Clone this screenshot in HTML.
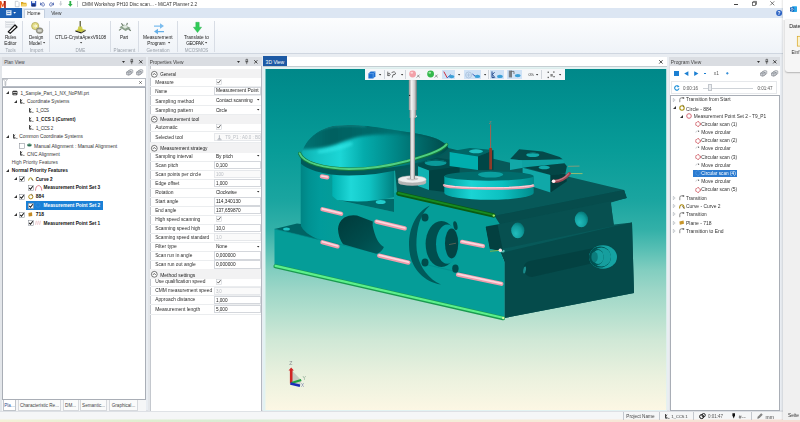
<!DOCTYPE html>
<html>
<head>
<meta charset="utf-8">
<title>MiCAT Planner 2.2</title>
<style>
html,body{margin:0;padding:0;}
body{width:800px;height:422px;overflow:hidden;position:relative;background:#eceff3;font-family:"Liberation Sans",sans-serif;font-size:4.8px;color:#222;line-height:1;}
.a{position:absolute;white-space:nowrap;}
.t{position:absolute;white-space:nowrap;color:#303030;}
svg{overflow:visible;}
#root{position:absolute;left:0;top:0;width:800px;height:422px;overflow:hidden;filter:blur(0.35px);}
</style>
</head>
<body>
<div id="root">
<div class="a" style="left:0.00px;top:0.00px;width:782.50px;height:8.20px;background:#ffffff;"></div>
<div class="a" style="left:0.00px;top:8.20px;width:782.50px;height:10.00px;background:#dce6f3;"></div>
<div class="a" style="left:0.00px;top:18.20px;width:782.50px;height:35.80px;background:linear-gradient(#fcfdfe,#eff3f8);border-bottom:0.6px solid #cfd6e0;box-sizing:border-box;"></div>
<div class="a" style="left:0.00px;top:54.00px;width:782.50px;height:357.00px;background:#e9edf2;"></div>
<div class="a" style="left:0.00px;top:410.30px;width:782.50px;height:1.70px;background:#dde0e5;"></div>
<div class="a" style="left:0.00px;top:412.00px;width:782.50px;height:8.20px;background:#f5f6f7;"></div>
<div class="a" style="left:0.00px;top:419.30px;width:800.00px;height:2.80px;background:linear-gradient(90deg,#f4f1d8,#dfeed0 18%,#d9ecd4 30%,#f1efd8 48%,#f7ead8 70%,#f5ddd4);-webkit-mask-image:linear-gradient(rgba(0,0,0,0.2),#000 45%);mask-image:linear-gradient(rgba(0,0,0,0.2),#000 45%);"></div>
<div class="a" style="left:782.50px;top:0.00px;width:17.50px;height:420.10px;background:#f0f0f0;"></div>
<div class="a" style="left:782.50px;top:0.00px;width:17.50px;height:19.50px;background:#ffffff;"></div>
<div class="a" style="left:784.70px;top:19.50px;width:20.00px;height:52.00px;background:#f6f6f6;border-radius:0 0 0 3px;box-shadow:0 0.5px 1.5px rgba(0,0,0,0.25);"></div>
<div class="a" style="left:780.50px;top:0.00px;width:2.50px;height:419.50px;background:linear-gradient(90deg,rgba(0,0,0,0),rgba(0,0,0,0.10));"></div>
<svg class="a" style="left:789.50px;top:6.30px" width="7" height="6.5" viewBox="0 0 7 6.5"><rect x="2" y="0.3" width="5" height="5.6" rx="0.6" fill="#28a8ea"/><rect x="0" y="1.2" width="4.2" height="4.2" rx="0.5" fill="#0f5fb8"/><circle cx="2.1" cy="3.3" r="1.1" fill="none" stroke="#fff" stroke-width="0.6"/></svg>
<div class="t" style="left:789.20px;top:22.91px;font-size:5.40px;line-height:6.48px;color:#222;">Date</div>
<svg class="a" style="left:796.60px;top:36.00px" width="4" height="10.5" viewBox="0 0 4 10.5"><rect x="0.3" y="0.3" width="6" height="9.8" fill="#fbf3d0" stroke="#d9a520" stroke-width="0.7"/></svg>
<div class="t" style="left:791.50px;top:49.99px;font-size:4.60px;line-height:5.52px;color:#333;">Einf</div>
<div class="t" style="left:788.00px;top:412.87px;font-size:4.80px;line-height:5.76px;color:#333;">Seite</div>
<svg class="a" style="left:0.00px;top:0.50px" width="6" height="7" viewBox="0 0 6 7"><path d="M0,0 L1.3,0 L2.8,4 L4.3,0 L5.6,0 L5.6,7 L4.3,7 L4.3,2.8 L3.2,6 L2.4,6 L1.3,2.8 L1.3,7 L0,7z" fill="#e8541c"/><path d="M3.6,0 L5.6,0 L5.6,7 L4.3,7 L4.3,2.8z" fill="#a01818"/></svg>
<svg class="a" style="left:15.00px;top:0.80px" width="4.4" height="6" viewBox="0 0 4.4 6"><path d="M0.3,0.3 L2.8,0.3 L4.1,1.6 L4.1,5.7 L0.3,5.7z" fill="#fff" stroke="#9aa4b0" stroke-width="0.5"/></svg>
<svg class="a" style="left:21.30px;top:1.20px" width="6.4" height="5.4" viewBox="0 0 6.4 5.4"><path d="M0,1 L2,1 L2.6,1.8 L5.4,1.8 L5.4,5.2 L0,5.2z" fill="#d9a520"/><path d="M0.9,2.8 L6.3,2.8 L5.4,5.2 L0,5.2z" fill="#f6d46a"/></svg>
<svg class="a" style="left:31.30px;top:1.00px" width="5.4" height="5.6" viewBox="0 0 5.4 5.6"><rect x="0" y="0" width="5.2" height="5.4" rx="0.4" fill="#2f56b8"/><rect x="1.1" y="0" width="3" height="2" fill="#dfe7f7"/><rect x="1" y="3.3" width="3.2" height="2.1" fill="#1a2f70"/></svg>
<svg class="a" style="left:40.00px;top:1.00px" width="5" height="5.5" viewBox="0 0 5 5.5"><path d="M0.6,1.6 L0.6,4 L3,4 M0.7,3.8 C1.5,1.2 4.4,1.2 4.4,3.6 C4.4,4.8 3.4,5.3 2.6,5.3" fill="none" stroke="#3b57a8" stroke-width="0.8"/></svg>
<svg class="a" style="left:48.60px;top:1.00px" width="5" height="5.5" viewBox="0 0 5 5.5"><path d="M4.4,1.6 L4.4,4 L2,4 M4.3,3.8 C3.5,1.2 0.6,1.2 0.6,3.6 C0.6,4.8 1.6,5.3 2.4,5.3" fill="none" stroke="#3b57a8" stroke-width="0.8"/></svg>
<svg class="a" style="left:58.60px;top:1.20px" width="3.4" height="5" viewBox="0 0 3.4 5"><path d="M1.1,0 L2.3,0 L2.3,2.6 L3.4,2.6 L1.7,5 L0,2.6 L1.1,2.6z" fill="#c9cdd3"/></svg>
<svg class="a" style="left:67.60px;top:0.80px" width="4.6" height="5.8" viewBox="0 0 4.6 5.8"><path d="M1.4,0 L3.2,0 L3.2,3 L4.6,3 L2.3,5.8 L0,3 L1.4,3z" fill="#2fb14a"/></svg>
<div class="a" style="left:77.00px;top:1.30px;width:0.50px;height:5.40px;background:#c8ccd2;"></div>
<div class="t" style="left:81.70px;top:1.63px;font-size:4.70px;line-height:5.64px;color:#333;">CMM Workshop PH10 Disc scan... - MiCAT Planner 2.2</div>
<div class="a" style="left:733.50px;top:4.20px;width:4.60px;height:0.60px;background:#444;"></div>
<svg class="a" style="left:752.00px;top:1.20px" width="5" height="5" viewBox="0 0 5 5"><rect x="0.4" y="1.2" width="3.2" height="3.2" fill="#fff" stroke="#444" stroke-width="0.7"/><path d="M1.4,1.2 L1.4,0.4 L4.5,0.4 L4.5,3.4 L3.6,3.4" fill="none" stroke="#444" stroke-width="0.7"/></svg>
<svg class="a" style="left:770.20px;top:1.20px" width="4.6" height="4.6" viewBox="0 0 4.6 4.6"><path d="M0.3,0.3 L4.3,4.3 M4.3,0.3 L0.3,4.3" stroke="#444" stroke-width="0.7"/></svg>
<svg class="a" style="left:776.40px;top:9.60px" width="6.2" height="6.2" viewBox="0 0 6.2 6.2"><circle cx="3.1" cy="3.1" r="3" fill="#2b62c4"/><text x="3.1" y="4.9" font-size="5" font-weight="bold" fill="#fff" text-anchor="middle" font-family="Liberation Sans, sans-serif">?</text></svg>
<div class="a" style="left:0.00px;top:8.20px;width:22.00px;height:10.00px;background:#1b5fb4;"></div>
<svg class="a" style="left:5.50px;top:10.40px" width="11" height="6" viewBox="0 0 11 6"><rect x="0.3" y="0.3" width="5" height="4.8" fill="#e9f1fb" stroke="#cfe0f5" stroke-width="0.3"/><rect x="1.2" y="1.4" width="3.2" height="0.7" fill="#1b5fb4"/><rect x="1.2" y="3" width="3.2" height="0.7" fill="#1b5fb4"/><path d="M7.3,2 L10,2 L8.65,3.7z" fill="#fff"/></svg>
<div class="a" style="left:24.00px;top:9.00px;width:20.50px;height:9.40px;background:#f9fbfd;border:0.5px solid #c3cfdf;border-bottom:none;box-sizing:border-box;"></div>
<div class="t" style="left:27.30px;top:11.18px;font-size:4.95px;line-height:5.94px;color:#222;">Home</div>
<div class="t" style="left:51.20px;top:11.27px;font-size:4.79px;line-height:5.75px;color:#333;">View</div>
<div class="a" style="left:22.20px;top:20.50px;width:0.50px;height:31.50px;background:#d8dde5;"></div>
<div class="a" style="left:49.20px;top:20.50px;width:0.50px;height:31.50px;background:#d8dde5;"></div>
<div class="a" style="left:110.00px;top:20.50px;width:0.50px;height:31.50px;background:#d8dde5;"></div>
<div class="a" style="left:137.70px;top:20.50px;width:0.50px;height:31.50px;background:#d8dde5;"></div>
<div class="a" style="left:177.40px;top:20.50px;width:0.50px;height:31.50px;background:#d8dde5;"></div>
<div class="a" style="left:213.60px;top:20.50px;width:0.50px;height:31.50px;background:#d8dde5;"></div>
<svg class="a" style="left:4.50px;top:21.00px" width="13" height="12.5" viewBox="0 0 13 12.5"><g stroke="#b9bec6" stroke-width="0.6"><path d="M1,1.6 H9 M1,3.4 H9 M1,5.2 H9"/></g><rect x="0.6" y="0.6" width="8.8" height="5.6" fill="none" stroke="#c4c8cf" stroke-width="0.4"/><path d="M3.2,10.8 L10,4 L12,6 L5.2,12.4z" fill="#fff" stroke="#111" stroke-width="1.2" stroke-linejoin="round"/></svg>
<div class="t" style="left:4.90px;top:35.36px;font-size:4.65px;line-height:5.58px;letter-spacing:-0.138px;color:#222;">Rules</div>
<div class="t" style="left:4.30px;top:40.90px;font-size:4.75px;line-height:5.70px;color:#222;">Editor</div>
<div class="t" style="left:5.45px;top:48.10px;font-size:4.41px;line-height:5.29px;color:#9aa1aa;">Tools</div>
<svg class="a" style="left:30.50px;top:21.50px" width="13" height="12" viewBox="0 0 13 12"><circle cx="4.2" cy="4" r="3.6" fill="#e4dd86" stroke="#a9a04a" stroke-width="0.7"/><path d="M2.6,4 H5.6 M4.4,2.8 L5.8,4 L4.4,5.2" stroke="#fff" stroke-width="0.9" fill="none"/><ellipse cx="8.6" cy="8.6" rx="3.4" ry="2.9" fill="#9a9a8c" stroke="#6e6e62" stroke-width="0.5"/><rect x="6.6" y="7.4" width="4" height="2.4" fill="#d8d8cc"/></svg>
<div class="t" style="left:29.05px;top:35.36px;font-size:4.65px;line-height:5.58px;letter-spacing:-0.029px;color:#222;">Design</div>
<div class="t" style="left:29.00px;top:40.96px;font-size:4.65px;line-height:5.58px;letter-spacing:-0.053px;color:#222;">Model</div>
<svg class="a" style="left:43.00px;top:42.30px" width="2.2" height="1.6" viewBox="0 0 2.2 1.6"><path d="M0,0 L2.2,0 L1.1,1.5z" fill="#333"/></svg>
<div class="t" style="left:29.70px;top:47.83px;font-size:4.87px;line-height:5.84px;color:#9aa1aa;">Import</div>
<svg class="a" style="left:75.00px;top:20.60px" width="11" height="13" viewBox="0 0 11 13"><rect x="4.6" y="0" width="1.2" height="6.5" fill="#55552a"/><path d="M3.3,5.5 L7,5.5 L7.6,8 L2.8,8z" fill="#d0cf52"/><path d="M0.3,9.4 L4.6,7.4 L10.6,8.8 L6.2,11.3z" fill="#c9c840"/><path d="M0.3,9.4 L6.2,11.3 L6.2,12.6 L0.3,10.6z" fill="#1b1b10"/><path d="M6.2,11.3 L10.6,8.8 L10.6,10 L6.2,12.6z" fill="#3a3a1c"/></svg>
<div class="t" style="left:55.00px;top:35.36px;font-size:4.65px;line-height:5.58px;letter-spacing:-0.011px;color:#222;">CTLG-CrystaApexV9108</div>
<svg class="a" style="left:79.60px;top:42.40px" width="2.2" height="1.6" viewBox="0 0 2.2 1.6"><path d="M0,0 L2.2,0 L1.1,1.5z" fill="#333"/></svg>
<div class="t" style="left:75.60px;top:48.02px;font-size:4.56px;line-height:5.47px;letter-spacing:-0.176px;color:#9aa1aa;">DME</div>
<svg class="a" style="left:117.50px;top:22.00px" width="14" height="10" viewBox="0 0 14 10"><path d="M1.5,5.2 L6,2.6 L12.6,6 L7.6,9z" fill="#8aa08a"/><path d="M3.4,1.2 L5,3.6 M9.4,0.8 L8.6,3.4 M1,8.4 L3.4,6.6 M12.8,8.8 L10.6,7" stroke="#6a7c6a" stroke-width="1.1"/><path d="M4,4.6 L7,3 L10,5 L7,6.8z" fill="#dfe8df"/></svg>
<div class="t" style="left:119.90px;top:35.36px;font-size:4.65px;line-height:5.58px;letter-spacing:-0.082px;color:#222;">Part</div>
<div class="t" style="left:113.60px;top:48.01px;font-size:4.57px;line-height:5.49px;color:#9aa1aa;">Placement</div>
<svg class="a" style="left:152.50px;top:21.50px" width="12" height="12.5" viewBox="0 0 12 12.5"><path d="M1,3.4 H7 V1.2 L11,4 L7,6.8 V4.8 H1z" fill="#7cbdee"/><path d="M11,8.9 H5 V6.7 L1,9.5 L5,12.3 V10.3 H11z" fill="#66b0e8"/></svg>
<div class="t" style="left:142.90px;top:35.23px;font-size:4.87px;line-height:5.85px;color:#222;">Measurement</div>
<div class="t" style="left:147.20px;top:40.87px;font-size:4.80px;line-height:5.76px;color:#222;">Program</div>
<svg class="a" style="left:167.60px;top:42.30px" width="2.2" height="1.6" viewBox="0 0 2.2 1.6"><path d="M0,0 L2.2,0 L1.1,1.5z" fill="#333"/></svg>
<div class="t" style="left:146.50px;top:47.96px;font-size:4.65px;line-height:5.58px;color:#9aa1aa;">Generation</div>
<svg class="a" style="left:192.60px;top:21.80px" width="9" height="11" viewBox="0 0 9 11"><path d="M2.8,0.3 H6.2 V5.2 H8.6 L4.5,10.6 L0.4,5.2 H2.8z" fill="#30cc58" stroke="#22a844" stroke-width="0.4"/></svg>
<div class="t" style="left:183.90px;top:35.29px;font-size:4.77px;line-height:5.72px;color:#222;">Translate to</div>
<div class="t" style="left:186.20px;top:40.96px;font-size:4.65px;line-height:5.58px;letter-spacing:-0.283px;color:#222;">GEOPAK</div>
<svg class="a" style="left:205.40px;top:42.30px" width="2.2" height="1.6" viewBox="0 0 2.2 1.6"><path d="M0,0 L2.2,0 L1.1,1.5z" fill="#333"/></svg>
<div class="t" style="left:184.85px;top:48.02px;font-size:4.56px;line-height:5.47px;letter-spacing:-0.079px;color:#9aa1aa;">MCOSMOS</div>
<div class="a" style="left:0.00px;top:57.20px;width:145.60px;height:9.00px;background:#dadde2;"></div>
<div class="t" style="left:4.20px;top:59.69px;font-size:4.61px;line-height:5.53px;color:#444;">Plan View</div>
<svg class="a" style="left:122.00px;top:60.90px" width="3" height="2" viewBox="0 0 3 2"><path d="M0,0 L3,0 L1.5,1.9z" fill="#333"/></svg>
<svg class="a" style="left:130.10px;top:59.20px" width="3.4" height="5.4" viewBox="0 0 3.4 5.4"><path d="M1,0.3 H2.6 V2.6 H1z M0.3,2.8 H3.2 M1.75,2.8 V5.2" fill="none" stroke="#333" stroke-width="0.6"/></svg>
<svg class="a" style="left:138.70px;top:59.80px" width="3.6" height="3.6" viewBox="0 0 3.6 3.6"><path d="M0.2,0.2 L3.4,3.4 M3.4,0.2 L0.2,3.4" stroke="#222" stroke-width="0.8"/></svg>
<div class="a" style="left:2.00px;top:66.20px;width:143.60px;height:11.40px;background:#ffffff;"></div>
<svg class="a" style="left:126.00px;top:69.00px" width="7" height="6.4" viewBox="0 0 7 6.4"><path d="M2.4,1.6 L4.8,0.4 L6.8,1 L6.8,3.6 L4.6,4.8 L2.4,4.2z" fill="#e3e5e8" stroke="#6f757e" stroke-width="0.5"/><path d="M0.6,3 L3,1.8 L5.2,2.4 L5.2,5 L2.8,6.2 L0.6,5.6z" fill="#cfd2d7" stroke="#666c75" stroke-width="0.55"/><path d="M0.6,3 L2.8,3.6 L5.2,2.4 M2.8,3.6 V6.2" fill="none" stroke="#666c75" stroke-width="0.4"/></svg>
<svg class="a" style="left:136.40px;top:69.00px" width="7" height="6.4" viewBox="0 0 7 6.4"><path d="M2.4,1.6 L4.8,0.4 L6.8,1 L6.8,3.6 L4.6,4.8 L2.4,4.2z" fill="#e3e5e8" stroke="#6f757e" stroke-width="0.5"/><path d="M0.6,3 L3,1.8 L5.2,2.4 L5.2,5 L2.8,6.2 L0.6,5.6z" fill="#cfd2d7" stroke="#666c75" stroke-width="0.55"/><path d="M0.6,3 L2.8,3.6 L5.2,2.4 M2.8,3.6 V6.2" fill="none" stroke="#666c75" stroke-width="0.4"/></svg>
<div class="a" style="left:2.00px;top:77.60px;width:143.60px;height:0.50px;background:#c9cdd3;"></div>
<div class="a" style="left:2.00px;top:78.10px;width:143.60px;height:8.60px;background:#ffffff;border:0.5px solid #b7bcc4;box-sizing:border-box;"></div>
<svg class="a" style="left:2.60px;top:79.20px" width="5" height="7" viewBox="0 0 5 7"><path d="M0.3,0.3 H4.5 L2.8,2.6 V6.4 L2,6.4 V2.6z" fill="#fff" stroke="#8a9098" stroke-width="0.5"/></svg>
<svg class="a" style="left:138.80px;top:81.00px" width="3" height="3" viewBox="0 0 3 3"><path d="M0.2,0.2 L2.8,2.8 M2.8,0.2 L0.2,2.8" stroke="#333" stroke-width="0.6"/></svg>
<div class="a" style="left:2.00px;top:86.70px;width:143.60px;height:313.50px;background:#ffffff;border:0.5px solid #a9aeb6;box-sizing:border-box;"></div>
<div class="a" style="left:0.00px;top:57.20px;width:2.20px;height:354.00px;background:#e3e6ea;"></div>
<svg class="a" style="left:5.90px;top:91.40px" width="3" height="3" viewBox="0 0 3 3"><path d="M3,0 L3,3 L0,3z" fill="#333"/></svg>
<svg class="a" style="left:12.20px;top:90.00px" width="6" height="6" viewBox="0 0 6 6"><rect x="0.4" y="0.8" width="5" height="4.4" rx="1" fill="#222"/><circle cx="2" cy="2.6" r="0.8" fill="#fff"/><circle cx="4" cy="2.6" r="0.8" fill="#fff"/><rect x="1.4" y="4" width="3" height="0.6" fill="#ddd"/></svg>
<div class="t" style="left:20.40px;top:90.80px;font-size:4.58px;line-height:5.49px;color:#333;">1_Sample_Part_1_NX_NoPMI.prt</div>
<svg class="a" style="left:14.00px;top:100.10px" width="3" height="3" viewBox="0 0 3 3"><path d="M3,0 L3,3 L0,3z" fill="#333"/></svg>
<svg class="a" style="left:20.40px;top:99.10px" width="5" height="5" viewBox="0 0 5 5"><path d="M0.5,0 V4.2 H2.2 M0.5,2.2 L2.2,0.8 M0.9,2.4 L2.3,4" fill="none" stroke="#222" stroke-width="0.8"/><path d="M2.6,4.4 H4.6" stroke="#222" stroke-width="0.5"/></svg>
<div class="t" style="left:27.00px;top:99.42px;font-size:4.72px;line-height:5.66px;color:#333;">Coordinate Systems</div>
<svg class="a" style="left:28.80px;top:107.90px" width="5" height="5" viewBox="0 0 5 5"><path d="M0.5,0 V4.2 H2.2 M0.5,2.2 L2.2,0.8 M0.9,2.4 L2.3,4" fill="none" stroke="#222" stroke-width="0.8"/><path d="M2.6,4.4 H4.6" stroke="#222" stroke-width="0.5"/></svg>
<div class="t" style="left:36.00px;top:108.37px;font-size:4.46px;line-height:5.36px;letter-spacing:-0.338px;color:#333;">1_CCS</div>
<svg class="a" style="left:28.80px;top:116.60px" width="5" height="5" viewBox="0 0 5 5"><path d="M0.5,0 V4.2 H2.2 M0.5,2.2 L2.2,0.8 M0.9,2.4 L2.3,4" fill="none" stroke="#222" stroke-width="0.8"/><path d="M2.6,4.4 H4.6" stroke="#222" stroke-width="0.5"/></svg>
<div class="t" style="left:36.00px;top:117.00px;font-size:4.59px;line-height:5.50px;color:#111;font-weight:bold;">1_CCS 1 (Current)</div>
<svg class="a" style="left:28.80px;top:125.40px" width="5" height="5" viewBox="0 0 5 5"><path d="M0.5,0 V4.2 H2.2 M0.5,2.2 L2.2,0.8 M0.9,2.4 L2.3,4" fill="none" stroke="#222" stroke-width="0.8"/><path d="M2.6,4.4 H4.6" stroke="#222" stroke-width="0.5"/></svg>
<div class="t" style="left:36.00px;top:125.87px;font-size:4.46px;line-height:5.36px;letter-spacing:-0.145px;color:#333;">1_CCS 2</div>
<svg class="a" style="left:5.90px;top:135.20px" width="3" height="3" viewBox="0 0 3 3"><path d="M3,0 L3,3 L0,3z" fill="#333"/></svg>
<svg class="a" style="left:13.00px;top:134.20px" width="5" height="5" viewBox="0 0 5 5"><path d="M0.5,0 V4.2 H2.2 M0.5,2.2 L2.2,0.8 M0.9,2.4 L2.3,4" fill="none" stroke="#222" stroke-width="0.8"/><path d="M2.6,4.4 H4.6" stroke="#222" stroke-width="0.5"/></svg>
<div class="t" style="left:19.30px;top:134.48px;font-size:4.78px;line-height:5.73px;color:#333;">Common Coordinate Systems</div>
<svg class="a" style="left:19.40px;top:142.50px" width="5.8" height="5.8" viewBox="0 0 5.8 5.8"><rect x="0.3" y="0.3" width="5.2" height="5.2" fill="#fff" stroke="#7d828b" stroke-width="0.5"/></svg>
<svg class="a" style="left:27.40px;top:143.40px" width="5" height="4" viewBox="0 0 5 4"><ellipse cx="2.4" cy="2" rx="2.3" ry="1.5" fill="#2c6a50"/><path d="M0.6,1.6 Q2.4,0.6 4.2,1.6" stroke="#9fd0b8" stroke-width="0.5" fill="none"/></svg>
<div class="t" style="left:34.00px;top:142.96px;font-size:4.98px;line-height:5.98px;color:#333;">Manual Alignment : Manual Alignment</div>
<svg class="a" style="left:20.40px;top:151.40px" width="5" height="5" viewBox="0 0 5 5"><path d="M0.5,0 V4.2 H2.2 M0.5,2.2 L2.2,0.8 M0.9,2.4 L2.3,4" fill="none" stroke="#222" stroke-width="0.8"/><path d="M2.6,4.4 H4.6" stroke="#222" stroke-width="0.5"/></svg>
<div class="t" style="left:27.00px;top:151.67px;font-size:4.80px;line-height:5.76px;color:#333;">CNC Alignment</div>
<div class="t" style="left:11.80px;top:160.09px;font-size:4.77px;line-height:5.72px;color:#444;">High Priority Features</div>
<svg class="a" style="left:5.90px;top:169.00px" width="3" height="3" viewBox="0 0 3 3"><path d="M3,0 L3,3 L0,3z" fill="#333"/></svg>
<div class="t" style="left:11.80px;top:168.26px;font-size:4.82px;line-height:5.78px;color:#111;font-weight:bold;">Normal Priority Features</div>
<svg class="a" style="left:13.90px;top:177.40px" width="3" height="3" viewBox="0 0 3 3"><path d="M3,0 L3,3 L0,3z" fill="#333"/></svg>
<svg class="a" style="left:19.20px;top:176.10px" width="5.8" height="5.8" viewBox="0 0 5.8 5.8"><rect x="0.3" y="0.3" width="5.2" height="5.2" fill="#fff" stroke="#7d828b" stroke-width="0.5"/><path d="M1.2,2.9 L2.5,4.3 L4.8,1.2" fill="none" stroke="#111" stroke-width="1.05"/></svg>
<svg class="a" style="left:27.80px;top:176.80px" width="6" height="4.4" viewBox="0 0 6 4.4"><path d="M0.6,3.6 Q0.8,0.7 2.6,0.7 Q4.2,0.7 4.6,3.4" fill="none" stroke="#a8900c" stroke-width="0.9"/><path d="M3.2,1.6 L5.2,3.8" stroke="#222" stroke-width="0.6"/></svg>
<div class="t" style="left:35.70px;top:176.77px;font-size:4.63px;line-height:5.56px;color:#111;font-weight:bold;">Curve 2</div>
<svg class="a" style="left:27.60px;top:184.90px" width="5.8" height="5.8" viewBox="0 0 5.8 5.8"><rect x="0.3" y="0.3" width="5.2" height="5.2" fill="#fff" stroke="#7d828b" stroke-width="0.5"/><path d="M1.2,2.9 L2.5,4.3 L4.8,1.2" fill="none" stroke="#111" stroke-width="1.05"/></svg>
<svg class="a" style="left:34.80px;top:184.80px" width="7.4" height="6" viewBox="0 0 7.4 6"><path d="M0.5,5.6 Q0.8,0.6 3.6,0.6 Q6.4,0.6 6.8,5.6" fill="none" stroke="#d0485a" stroke-width="0.7"/></svg>
<div class="t" style="left:43.60px;top:185.48px;font-size:4.78px;line-height:5.74px;color:#111;font-weight:bold;">Measurement Point Set 3</div>
<svg class="a" style="left:13.90px;top:195.00px" width="3" height="3" viewBox="0 0 3 3"><path d="M3,0 L3,3 L0,3z" fill="#333"/></svg>
<svg class="a" style="left:19.20px;top:193.70px" width="5.8" height="5.8" viewBox="0 0 5.8 5.8"><rect x="0.3" y="0.3" width="5.2" height="5.2" fill="#fff" stroke="#7d828b" stroke-width="0.5"/><path d="M1.2,2.9 L2.5,4.3 L4.8,1.2" fill="none" stroke="#111" stroke-width="1.05"/></svg>
<svg class="a" style="left:28.00px;top:193.80px" width="5.6" height="5.6" viewBox="0 0 5.6 5.6"><circle cx="2.8" cy="2.8" r="2.1" fill="none" stroke="#b08a10" stroke-width="1"/><path d="M3.4,0.2 L4.8,1.4" stroke="#222" stroke-width="0.6"/></svg>
<div class="t" style="left:35.70px;top:194.16px;font-size:4.98px;line-height:5.97px;color:#111;font-weight:bold;">884</div>
<div class="a" style="left:26.20px;top:200.70px;width:77.20px;height:9.30px;background:#1a80d6;"></div>
<svg class="a" style="left:27.60px;top:202.50px" width="5.8" height="5.8" viewBox="0 0 5.8 5.8"><rect x="0.3" y="0.3" width="5.2" height="5.2" fill="#fff" stroke="#7d828b" stroke-width="0.5"/><path d="M1.2,2.9 L2.5,4.3 L4.8,1.2" fill="none" stroke="#111" stroke-width="1.05"/></svg>
<svg class="a" style="left:35.00px;top:202.40px" width="6" height="6" viewBox="0 0 6 6"><circle cx="3" cy="3" r="2.2" fill="none" stroke="#3d8fe0" stroke-width="0.6"/></svg>
<div class="t" style="left:43.60px;top:203.08px;font-size:4.78px;line-height:5.74px;color:#ffffff;font-weight:bold;">Measurement Point Set 2</div>
<svg class="a" style="left:13.90px;top:212.80px" width="3" height="3" viewBox="0 0 3 3"><path d="M3,0 L3,3 L0,3z" fill="#333"/></svg>
<svg class="a" style="left:19.20px;top:211.50px" width="5.8" height="5.8" viewBox="0 0 5.8 5.8"><rect x="0.3" y="0.3" width="5.2" height="5.2" fill="#fff" stroke="#7d828b" stroke-width="0.5"/><path d="M1.2,2.9 L2.5,4.3 L4.8,1.2" fill="none" stroke="#111" stroke-width="1.05"/></svg>
<svg class="a" style="left:28.00px;top:212.00px" width="5" height="4.8" viewBox="0 0 5 4.8"><path d="M0.4,0.9 L4,0.3 L4.3,4 L0.7,4.6z" fill="#c48a24"/></svg>
<div class="t" style="left:35.70px;top:211.96px;font-size:4.98px;line-height:5.97px;color:#111;font-weight:bold;">718</div>
<svg class="a" style="left:27.60px;top:220.10px" width="5.8" height="5.8" viewBox="0 0 5.8 5.8"><rect x="0.3" y="0.3" width="5.2" height="5.2" fill="#fff" stroke="#7d828b" stroke-width="0.5"/><path d="M1.2,2.9 L2.5,4.3 L4.8,1.2" fill="none" stroke="#111" stroke-width="1.05"/></svg>
<svg class="a" style="left:35.00px;top:220.40px" width="6.4" height="5.2" viewBox="0 0 6.4 5.2"><path d="M0.6,4.8 L1.4,0.8 M2.6,4.8 L3.4,0.8 M4.6,4.8 L5.4,0.8" stroke="#e0a0a8" stroke-width="0.6"/></svg>
<div class="t" style="left:43.60px;top:220.68px;font-size:4.78px;line-height:5.74px;color:#111;font-weight:bold;">Measurement Point Set 1</div>
<div class="a" style="left:2.00px;top:400.20px;width:143.60px;height:10.80px;background:#f5f6f7;"></div>
<div class="a" style="left:2.60px;top:400.00px;width:13.80px;height:10.60px;background:#ffffff;border:0.5px solid #bfc4ca;border-top:none;box-sizing:border-box;"></div>
<div class="t" style="left:4.30px;top:403.41px;font-size:4.56px;line-height:5.48px;color:#1f4e8c;">Pla...</div>
<div class="a" style="left:17.80px;top:400.40px;width:43.40px;height:10.20px;background:#fafbfb;border:0.5px solid #d6d9dd;border-top:none;box-sizing:border-box;"></div>
<div class="t" style="left:19.95px;top:403.39px;font-size:4.60px;line-height:5.52px;color:#444;">Characteristic Re...</div>
<div class="a" style="left:62.60px;top:400.40px;width:16.00px;height:10.20px;background:#fafbfb;border:0.5px solid #d6d9dd;border-top:none;box-sizing:border-box;"></div>
<div class="t" style="left:65.11px;top:403.39px;font-size:4.60px;line-height:5.52px;color:#444;">DM...</div>
<div class="a" style="left:80.00px;top:400.40px;width:27.20px;height:10.20px;background:#fafbfb;border:0.5px solid #d6d9dd;border-top:none;box-sizing:border-box;"></div>
<div class="t" style="left:82.10px;top:403.39px;font-size:4.60px;line-height:5.52px;color:#444;">Semantic...</div>
<div class="a" style="left:108.60px;top:400.40px;width:29.80px;height:10.20px;background:#fafbfb;border:0.5px solid #d6d9dd;border-top:none;box-sizing:border-box;"></div>
<div class="t" style="left:111.74px;top:403.39px;font-size:4.60px;line-height:5.52px;color:#444;">Graphical...</div>
<div class="a" style="left:147.60px;top:57.20px;width:114.40px;height:9.00px;background:#dadde2;"></div>
<div class="t" style="left:149.70px;top:59.55px;font-size:4.84px;line-height:5.81px;color:#444;">Properties View</div>
<svg class="a" style="left:237.00px;top:60.90px" width="3" height="2" viewBox="0 0 3 2"><path d="M0,0 L3,0 L1.5,1.9z" fill="#333"/></svg>
<svg class="a" style="left:245.10px;top:59.20px" width="3.4" height="5.4" viewBox="0 0 3.4 5.4"><path d="M1,0.3 H2.6 V2.6 H1z M0.3,2.8 H3.2 M1.75,2.8 V5.2" fill="none" stroke="#333" stroke-width="0.6"/></svg>
<svg class="a" style="left:253.70px;top:59.80px" width="3.6" height="3.6" viewBox="0 0 3.6 3.6"><path d="M0.2,0.2 L3.4,3.4 M3.4,0.2 L0.2,3.4" stroke="#222" stroke-width="0.8"/></svg>
<div class="a" style="left:147.60px;top:66.20px;width:114.40px;height:344.80px;background:#ffffff;"></div>
<div class="a" style="left:147.60px;top:66.20px;width:2.00px;height:344.80px;background:#e3e6ea;"></div>
<div class="a" style="left:149.60px;top:66.20px;width:0.50px;height:344.80px;background:#c4c8ce;"></div>
<div class="a" style="left:261.00px;top:66.20px;width:0.50px;height:344.80px;background:#b4b9c1;"></div>
<div class="a" style="left:149.60px;top:410.60px;width:111.90px;height:0.40px;background:#dfe2e6;"></div>
<div class="a" style="left:150.10px;top:69.30px;width:110.90px;height:9.20px;background:#f2f2f3;"></div>
<svg class="a" style="left:150.60px;top:70.60px" width="6.6" height="6.6" viewBox="0 0 6.6 6.6"><circle cx="3.3" cy="3.3" r="2.9" fill="#fff" stroke="#333" stroke-width="0.65"/><path d="M1.9,3.9 L3.3,2.5 L4.7,3.9" fill="none" stroke="#222" stroke-width="0.75"/></svg>
<div class="t" style="left:160.20px;top:71.77px;font-size:4.46px;line-height:5.36px;letter-spacing:-0.011px;color:#222;">General</div>
<div class="t" style="left:155.20px;top:79.50px;font-size:4.76px;line-height:5.71px;color:#2e2e2e;">Measure</div>
<div class="a" style="left:150.10px;top:86.30px;width:110.90px;height:0.40px;background:#ebedef;"></div>
<svg class="a" style="left:216.20px;top:79.00px" width="5.6" height="5.6" viewBox="0 0 5.6 5.6"><rect x="0.3" y="0.3" width="5" height="5" fill="#fff" stroke="#c3c7cd" stroke-width="0.5"/><path d="M1.2,2.8 L2.4,4.1 L4.6,1.2" fill="none" stroke="#222" stroke-width="0.7"/></svg>
<div class="t" style="left:155.20px;top:88.51px;font-size:4.57px;line-height:5.49px;color:#2e2e2e;">Name</div>
<div class="a" style="left:150.10px;top:95.20px;width:110.90px;height:0.40px;background:#ebedef;"></div>
<div class="a" style="left:214.40px;top:86.50px;width:46.60px;height:8.40px;background:#ffffff;border:0.5px solid #d4d7dc;box-sizing:border-box;"></div>
<div class="t" style="left:215.90px;top:88.28px;font-size:4.95px;line-height:5.94px;color:#222;">Measurement Point</div>
<div class="t" style="left:155.20px;top:97.75px;font-size:5.00px;line-height:6.00px;color:#2e2e2e;">Sampling method</div>
<div class="a" style="left:150.10px;top:104.70px;width:110.90px;height:0.40px;background:#ebedef;"></div>
<div class="t" style="left:215.90px;top:97.90px;font-size:4.75px;line-height:5.70px;color:#222;">Contact scanning</div>
<svg class="a" style="left:256.60px;top:99.40px" width="2.4" height="1.8" viewBox="0 0 2.4 1.8"><path d="M0,0 L2.4,0 L1.2,1.6z" fill="#222"/></svg>
<div class="t" style="left:155.20px;top:107.25px;font-size:5.00px;line-height:6.00px;color:#2e2e2e;">Sampling pattern</div>
<div class="a" style="left:150.10px;top:114.20px;width:110.90px;height:0.40px;background:#ebedef;"></div>
<div class="t" style="left:215.90px;top:107.57px;font-size:4.46px;line-height:5.36px;letter-spacing:-0.018px;color:#222;">Circle</div>
<svg class="a" style="left:256.60px;top:108.90px" width="2.4" height="1.8" viewBox="0 0 2.4 1.8"><path d="M0,0 L2.4,0 L1.2,1.6z" fill="#222"/></svg>
<div class="a" style="left:150.10px;top:114.60px;width:110.90px;height:9.20px;background:#f2f2f3;"></div>
<svg class="a" style="left:150.60px;top:115.90px" width="6.6" height="6.6" viewBox="0 0 6.6 6.6"><circle cx="3.3" cy="3.3" r="2.9" fill="#fff" stroke="#333" stroke-width="0.65"/><path d="M1.9,3.9 L3.3,2.5 L4.7,3.9" fill="none" stroke="#222" stroke-width="0.75"/></svg>
<div class="t" style="left:160.20px;top:116.81px;font-size:4.90px;line-height:5.88px;color:#222;">Measurement tool</div>
<div class="t" style="left:155.20px;top:124.33px;font-size:5.04px;line-height:6.05px;color:#2e2e2e;">Automatic</div>
<div class="a" style="left:150.10px;top:131.30px;width:110.90px;height:0.40px;background:#ebedef;"></div>
<svg class="a" style="left:216.20px;top:124.00px" width="5.6" height="5.6" viewBox="0 0 5.6 5.6"><rect x="0.3" y="0.3" width="5" height="5" fill="#fff" stroke="#c3c7cd" stroke-width="0.5"/><path d="M1.2,2.8 L2.4,4.1 L4.6,1.2" fill="none" stroke="#222" stroke-width="0.7"/></svg>
<div class="t" style="left:155.20px;top:134.84px;font-size:4.84px;line-height:5.81px;color:#2e2e2e;">Selected tool</div>
<div class="a" style="left:150.10px;top:141.70px;width:110.90px;height:0.40px;background:#ebedef;"></div>
<div class="a" style="left:214.40px;top:133.00px;width:46.60px;height:8.40px;background:#fafafa;border:0.5px solid #e6e8eb;box-sizing:border-box;"></div>
<div class="t" style="left:225.20px;top:135.05px;font-size:4.50px;line-height:5.40px;color:#b9bdc3;clip-path:inset(0 3.6px 0 0);">T9_P1 : A0.0 : B0.0</div>
<div class="a" style="left:150.10px;top:143.40px;width:110.90px;height:9.20px;background:#f2f2f3;"></div>
<svg class="a" style="left:150.60px;top:144.70px" width="6.6" height="6.6" viewBox="0 0 6.6 6.6"><circle cx="3.3" cy="3.3" r="2.9" fill="#fff" stroke="#333" stroke-width="0.65"/><path d="M1.9,3.9 L3.3,2.5 L4.7,3.9" fill="none" stroke="#222" stroke-width="0.75"/></svg>
<div class="t" style="left:160.20px;top:145.69px;font-size:4.76px;line-height:5.72px;color:#222;">Measurement strategy</div>
<div class="t" style="left:155.20px;top:153.62px;font-size:4.88px;line-height:5.85px;color:#2e2e2e;">Sampling interval</div>
<div class="a" style="left:150.10px;top:160.50px;width:110.90px;height:0.40px;background:#ebedef;"></div>
<div class="t" style="left:215.90px;top:153.67px;font-size:4.81px;line-height:5.77px;color:#222;">By pitch</div>
<svg class="a" style="left:256.60px;top:155.20px" width="2.4" height="1.8" viewBox="0 0 2.4 1.8"><path d="M0,0 L2.4,0 L1.2,1.6z" fill="#222"/></svg>
<div class="t" style="left:155.20px;top:162.67px;font-size:4.97px;line-height:5.96px;color:#2e2e2e;">Scan pitch</div>
<div class="a" style="left:150.10px;top:169.60px;width:110.90px;height:0.40px;background:#ebedef;"></div>
<div class="a" style="left:214.40px;top:160.90px;width:46.60px;height:8.40px;background:#ffffff;border:0.5px solid #d4d7dc;box-sizing:border-box;"></div>
<div class="t" style="left:215.90px;top:162.84px;font-size:4.68px;line-height:5.61px;color:#222;">0,100</div>
<div class="t" style="left:155.20px;top:171.66px;font-size:4.81px;line-height:5.77px;color:#2e2e2e;">Scan points per circle</div>
<div class="a" style="left:150.10px;top:178.50px;width:110.90px;height:0.40px;background:#ebedef;"></div>
<div class="a" style="left:214.40px;top:169.80px;width:46.60px;height:8.40px;background:#fafafa;border:0.5px solid #e6e8eb;box-sizing:border-box;"></div>
<div class="t" style="left:215.90px;top:171.78px;font-size:4.62px;line-height:5.54px;color:#b9bdc3;">100</div>
<div class="t" style="left:155.20px;top:180.77px;font-size:4.80px;line-height:5.76px;color:#2e2e2e;">Edge offset</div>
<div class="a" style="left:150.10px;top:187.60px;width:110.90px;height:0.40px;background:#ebedef;"></div>
<div class="a" style="left:214.40px;top:178.90px;width:46.60px;height:8.40px;background:#ffffff;border:0.5px solid #d4d7dc;box-sizing:border-box;"></div>
<div class="t" style="left:215.90px;top:180.84px;font-size:4.68px;line-height:5.61px;color:#222;">1,000</div>
<div class="t" style="left:155.20px;top:189.79px;font-size:4.94px;line-height:5.93px;color:#2e2e2e;">Rotation</div>
<div class="a" style="left:150.10px;top:196.70px;width:110.90px;height:0.40px;background:#ebedef;"></div>
<div class="t" style="left:215.90px;top:189.96px;font-size:4.64px;line-height:5.57px;color:#222;">Clockwise</div>
<svg class="a" style="left:256.60px;top:191.40px" width="2.4" height="1.8" viewBox="0 0 2.4 1.8"><path d="M0,0 L2.4,0 L1.2,1.6z" fill="#222"/></svg>
<div class="t" style="left:155.20px;top:199.15px;font-size:4.84px;line-height:5.81px;color:#2e2e2e;">Start angle</div>
<div class="a" style="left:150.10px;top:206.00px;width:110.90px;height:0.40px;background:#ebedef;"></div>
<div class="a" style="left:214.40px;top:197.30px;width:46.60px;height:8.40px;background:#ffffff;border:0.5px solid #d4d7dc;box-sizing:border-box;"></div>
<div class="t" style="left:215.90px;top:199.18px;font-size:4.78px;line-height:5.74px;color:#222;">114,340130</div>
<div class="t" style="left:155.20px;top:207.93px;font-size:4.71px;line-height:5.65px;color:#2e2e2e;">End angle</div>
<div class="a" style="left:150.10px;top:214.70px;width:110.90px;height:0.40px;background:#ebedef;"></div>
<div class="a" style="left:214.40px;top:206.00px;width:46.60px;height:8.40px;background:#ffffff;border:0.5px solid #d4d7dc;box-sizing:border-box;"></div>
<div class="t" style="left:215.90px;top:207.92px;font-size:4.71px;line-height:5.66px;color:#222;">137,659870</div>
<div class="t" style="left:155.20px;top:216.65px;font-size:4.84px;line-height:5.81px;color:#2e2e2e;">High speed scanning</div>
<div class="a" style="left:150.10px;top:223.50px;width:110.90px;height:0.40px;background:#ebedef;"></div>
<svg class="a" style="left:216.20px;top:216.20px" width="5.6" height="5.6" viewBox="0 0 5.6 5.6"><rect x="0.3" y="0.3" width="5" height="5" fill="#fff" stroke="#c3c7cd" stroke-width="0.5"/><path d="M1.2,2.8 L2.4,4.1 L4.6,1.2" fill="none" stroke="#222" stroke-width="0.7"/></svg>
<div class="t" style="left:155.20px;top:225.65px;font-size:4.84px;line-height:5.81px;color:#2e2e2e;">Scanning speed high</div>
<div class="a" style="left:150.10px;top:232.50px;width:110.90px;height:0.40px;background:#ebedef;"></div>
<div class="a" style="left:214.40px;top:223.80px;width:46.60px;height:8.40px;background:#ffffff;border:0.5px solid #d4d7dc;box-sizing:border-box;"></div>
<div class="t" style="left:215.90px;top:225.74px;font-size:4.68px;line-height:5.61px;color:#222;">10,0</div>
<div class="t" style="left:155.20px;top:234.69px;font-size:4.77px;line-height:5.72px;color:#2e2e2e;">Scanning speed standard</div>
<div class="a" style="left:150.10px;top:241.50px;width:110.90px;height:0.40px;background:#ebedef;"></div>
<div class="a" style="left:214.40px;top:232.80px;width:46.60px;height:8.40px;background:#fafafa;border:0.5px solid #e6e8eb;box-sizing:border-box;"></div>
<div class="t" style="left:215.90px;top:234.87px;font-size:4.46px;line-height:5.36px;letter-spacing:-0.168px;color:#b9bdc3;">1,0</div>
<div class="t" style="left:155.20px;top:244.10px;font-size:4.92px;line-height:5.90px;color:#2e2e2e;">Filter type</div>
<div class="a" style="left:150.10px;top:251.00px;width:110.90px;height:0.40px;background:#ebedef;"></div>
<div class="t" style="left:215.90px;top:244.16px;font-size:4.81px;line-height:5.77px;color:#222;">None</div>
<svg class="a" style="left:256.60px;top:245.70px" width="2.4" height="1.8" viewBox="0 0 2.4 1.8"><path d="M0,0 L2.4,0 L1.2,1.6z" fill="#222"/></svg>
<div class="t" style="left:155.20px;top:253.08px;font-size:4.78px;line-height:5.74px;color:#2e2e2e;">Scan run in angle</div>
<div class="a" style="left:150.10px;top:259.90px;width:110.90px;height:0.40px;background:#ebedef;"></div>
<div class="a" style="left:214.40px;top:251.20px;width:46.60px;height:8.40px;background:#ffffff;border:0.5px solid #d4d7dc;box-sizing:border-box;"></div>
<div class="t" style="left:215.90px;top:253.12px;font-size:4.72px;line-height:5.67px;color:#222;">0,000000</div>
<div class="t" style="left:155.20px;top:262.05px;font-size:4.84px;line-height:5.80px;color:#2e2e2e;">Scan run out angle</div>
<div class="a" style="left:150.10px;top:268.90px;width:110.90px;height:0.40px;background:#ebedef;"></div>
<div class="a" style="left:214.40px;top:260.20px;width:46.60px;height:8.40px;background:#ffffff;border:0.5px solid #d4d7dc;box-sizing:border-box;"></div>
<div class="t" style="left:215.90px;top:262.12px;font-size:4.72px;line-height:5.67px;color:#222;">0,000000</div>
<div class="a" style="left:150.10px;top:269.40px;width:110.90px;height:9.20px;background:#f2f2f3;"></div>
<svg class="a" style="left:150.60px;top:270.70px" width="6.6" height="6.6" viewBox="0 0 6.6 6.6"><circle cx="3.3" cy="3.3" r="2.9" fill="#fff" stroke="#333" stroke-width="0.65"/><path d="M1.9,3.9 L3.3,2.5 L4.7,3.9" fill="none" stroke="#222" stroke-width="0.75"/></svg>
<div class="t" style="left:160.20px;top:271.56px;font-size:4.99px;line-height:5.98px;color:#222;">Method settings</div>
<div class="t" style="left:155.20px;top:279.44px;font-size:4.86px;line-height:5.83px;color:#2e2e2e;">Use qualification speed</div>
<div class="a" style="left:150.10px;top:286.30px;width:110.90px;height:0.40px;background:#ebedef;"></div>
<svg class="a" style="left:216.20px;top:279.00px" width="5.6" height="5.6" viewBox="0 0 5.6 5.6"><rect x="0.3" y="0.3" width="5" height="5" fill="#fff" stroke="#c3c7cd" stroke-width="0.5"/><path d="M1.2,2.8 L2.4,4.1 L4.6,1.2" fill="none" stroke="#222" stroke-width="0.7"/></svg>
<div class="t" style="left:155.20px;top:288.35px;font-size:4.83px;line-height:5.80px;color:#2e2e2e;">CMM measurement speed</div>
<div class="a" style="left:150.10px;top:295.20px;width:110.90px;height:0.40px;background:#ebedef;"></div>
<div class="a" style="left:214.40px;top:286.50px;width:46.60px;height:8.40px;background:#fafafa;border:0.5px solid #e6e8eb;box-sizing:border-box;"></div>
<div class="t" style="left:215.90px;top:288.57px;font-size:4.46px;line-height:5.36px;letter-spacing:-0.168px;color:#b9bdc3;">3,0</div>
<div class="t" style="left:155.20px;top:297.44px;font-size:4.85px;line-height:5.82px;color:#2e2e2e;">Approach distance</div>
<div class="a" style="left:150.10px;top:304.30px;width:110.90px;height:0.40px;background:#ebedef;"></div>
<div class="a" style="left:214.40px;top:295.60px;width:46.60px;height:8.40px;background:#ffffff;border:0.5px solid #d4d7dc;box-sizing:border-box;"></div>
<div class="t" style="left:215.90px;top:297.54px;font-size:4.68px;line-height:5.61px;color:#222;">1,000</div>
<div class="t" style="left:155.20px;top:306.59px;font-size:4.94px;line-height:5.92px;color:#2e2e2e;">Measurement length</div>
<div class="a" style="left:150.10px;top:313.50px;width:110.90px;height:0.40px;background:#ebedef;"></div>
<div class="a" style="left:214.40px;top:304.80px;width:46.60px;height:8.40px;background:#ffffff;border:0.5px solid #d4d7dc;box-sizing:border-box;"></div>
<div class="t" style="left:215.90px;top:306.74px;font-size:4.68px;line-height:5.61px;color:#222;">5,000</div>
<svg class="a" style="left:217.20px;top:134.60px" width="5" height="5.4" viewBox="0 0 5 5.4"><path d="M2.4,0.2 V3.6 M0.4,4.8 H4.6 M1.2,3.6 H3.6" stroke="#9aa0a8" stroke-width="0.7" fill="none"/></svg>
<div class="a" style="left:263.20px;top:57.20px;width:403.60px;height:9.20px;background:#ffffff;"></div>
<div class="a" style="left:263.40px;top:56.30px;width:23.20px;height:10.40px;background:#1c59a4;"></div>
<div class="t" style="left:265.60px;top:59.24px;font-size:5.02px;line-height:6.02px;color:#ffffff;">3D View</div>
<svg class="a" style="left:658.60px;top:59.80px" width="3.8" height="3.8" viewBox="0 0 3.8 3.8"><path d="M0.2,0.2 L3.6,3.6 M3.6,0.2 L0.2,3.6" stroke="#222" stroke-width="0.8"/></svg>
<div class="a" style="left:263.20px;top:66.40px;width:403.60px;height:344.20px;background:#e2f2f2;"></div>
<div class="a" style="left:263.20px;top:66.40px;width:403.60px;height:1.00px;background:#c4cdd2;"></div>
<svg class="a" style="left:0;top:0" width="800" height="422" viewBox="0 0 800 422">
<defs>
<linearGradient id="bg" x1="0" y1="0" x2="0" y2="1">
<stop offset="0" stop-color="#008889"/><stop offset="0.12" stop-color="#029291"/><stop offset="0.24" stop-color="#089c98"/><stop offset="0.384" stop-color="#1aa5a0"/><stop offset="0.47" stop-color="#32b0a8"/><stop offset="0.53" stop-color="#58bfb4"/><stop offset="0.59" stop-color="#82cec0"/><stop offset="0.648" stop-color="#9cd6c7"/><stop offset="0.707" stop-color="#b0decd"/><stop offset="0.795" stop-color="#d0e8d6"/><stop offset="0.9" stop-color="#eaf1de"/><stop offset="1" stop-color="#fcf7e4"/>
</linearGradient>
<clipPath id="vp"><rect x="265.5" y="69" width="400.7" height="341"/></clipPath>
<radialGradient id="dome" cx="0.28" cy="0.3" r="0.75">
<stop offset="0" stop-color="#22cfd0"/><stop offset="0.35" stop-color="#00a3a4"/><stop offset="0.75" stop-color="#007070"/><stop offset="1" stop-color="#005656"/>
</radialGradient>
<linearGradient id="neck" x1="0" y1="0" x2="1" y2="0">
<stop offset="0" stop-color="#00b0b0"/><stop offset="0.3" stop-color="#1fd8d8"/><stop offset="0.6" stop-color="#10c4c4"/><stop offset="1" stop-color="#008080"/>
</linearGradient>
<linearGradient id="cylL" gradientUnits="userSpaceOnUse" x1="300.8" y1="0" x2="340" y2="0">
<stop offset="0" stop-color="#008484"/><stop offset="0.2" stop-color="#009292"/><stop offset="0.5" stop-color="#019b9b"/><stop offset="1" stop-color="#059d98"/>
</linearGradient>
<linearGradient id="disc" x1="0" y1="0" x2="1" y2="0">
<stop offset="0" stop-color="#00a0a0"/><stop offset="0.3" stop-color="#1ad4d4"/><stop offset="0.65" stop-color="#0cc0c0"/><stop offset="1" stop-color="#008c8c"/>
</linearGradient>
<linearGradient id="sty" x1="0" y1="0" x2="1" y2="0">
<stop offset="0" stop-color="#8c8c8c"/><stop offset="0.35" stop-color="#f4f4f4"/><stop offset="0.7" stop-color="#cfcfcf"/><stop offset="1" stop-color="#7a7a7a"/>
</linearGradient>
<linearGradient id="grn" x1="0" y1="0" x2="0" y2="1">
<stop offset="0" stop-color="#2fbf62"/><stop offset="0.5" stop-color="#55ea86"/><stop offset="1" stop-color="#1f9a4c"/>
</linearGradient>
<radialGradient id="hole" cx="0.35" cy="0.7" r="0.8">
<stop offset="0" stop-color="#22bcbc"/><stop offset="0.6" stop-color="#109c9c"/><stop offset="1" stop-color="#006a6a"/>
</radialGradient>
<linearGradient id="domeTop" gradientUnits="userSpaceOnUse" x1="302" y1="0" x2="449" y2="0">
<stop offset="0" stop-color="#007474"/><stop offset="0.2" stop-color="#006060"/><stop offset="0.45" stop-color="#006868"/><stop offset="0.65" stop-color="#007272"/><stop offset="0.85" stop-color="#005454"/><stop offset="1" stop-color="#004646"/>
</linearGradient>
<linearGradient id="domeSkirt" gradientUnits="userSpaceOnUse" x1="302" y1="0" x2="449" y2="0">
<stop offset="0" stop-color="#0eb0b0"/><stop offset="0.09" stop-color="#14c2c2"/><stop offset="0.26" stop-color="#1cd6d6"/><stop offset="0.42" stop-color="#04acac"/><stop offset="0.62" stop-color="#008a8a"/><stop offset="0.82" stop-color="#006666"/><stop offset="1" stop-color="#004848"/>
</linearGradient>
<filter id="b1" x="-20%" y="-50%" width="140%" height="200%"><feGaussianBlur stdDeviation="0.9"/></filter>
<filter id="b15" x="-20%" y="-50%" width="140%" height="200%"><feGaussianBlur stdDeviation="1.4"/></filter>
<linearGradient id="kid" x1="0" y1="0" x2="1" y2="1">
<stop offset="0" stop-color="#003a3a"/><stop offset="0.6" stop-color="#004c4c"/><stop offset="1" stop-color="#005e5e"/>
</linearGradient>
</defs>
<g clip-path="url(#vp)">
<rect x="265" y="69" width="402" height="341" fill="url(#bg)"/>
<!-- dark top surface + right faces -->
<polygon points="440,146 624,190 627,198 610.5,202 614,224.5 632,222.5 634,293 504.5,318 504.5,250 489.7,249 485.5,226.5 499.7,224 494,215 397,192 395,170" fill="#075959"/>
<polygon points="494,216 624,190 626.4,198 611,202.4 613.4,226 497,250 489.7,249 485.5,227" fill="#075050"/>
<polygon points="494,216 624,190 626.4,198 497.6,224.4" fill="#064c4c"/>
<polygon points="492,250.3 503,252.4 613.4,226.4 632,222.6 634,293 504.5,318 504.5,262 500,251.4" fill="#054b4b"/>
<polygon points="485.5,227 497.6,224.4 503,251 489.7,249" fill="#034040"/>
<!-- right face holes -->
<ellipse cx="581.4" cy="219.4" rx="6.6" ry="7.8" fill="url(#hole)"/><ellipse cx="517.8" cy="230.4" rx="6.6" ry="7.8" fill="url(#hole)"/>
<path d="M524,266 q1,-4 6,-5 l64,-13 l4,14 l-66,15 q-7,0 -8,-8z" fill="#033f3f" opacity="0.85"/>
<ellipse cx="524.6" cy="270" rx="1.3" ry="3.6" fill="#1a8c8c" transform="rotate(10 524.6 270)"/>
<ellipse cx="603" cy="257" rx="14" ry="11.8" fill="#15a3a3"/>
<ellipse cx="600" cy="257" rx="11" ry="10.6" fill="#004e4e"/>
<ellipse cx="601.4" cy="257" rx="9.6" ry="9.6" fill="#169e9e"/>
<ellipse cx="597" cy="257" rx="6.6" ry="8" fill="#005252"/>
<ellipse cx="598.2" cy="257" rx="5.4" ry="7" fill="#17a0a0"/>
<ellipse cx="594.6" cy="257" rx="3.2" ry="5.2" fill="#0c7c7c"/>
<!-- front faces -->
<polygon points="300.8,158 300.8,235.2 274.5,229 274.5,265.5 504.5,318 504.5,262 500,251 489.7,249 485.5,226.5 499.7,224 494,215 397,192 394,193 394,212 337,200 332,168" fill="#059d98"/>
<path d="M300.8,158 L300.8,226 Q304,233 318,239.4 L340,244.6 L340,158z" fill="url(#cylL)"/>
<!-- flange top -->
<path d="M274.5,229 L297,223.6 L301,224 L301,226 Q304,233 318,239.4 L300.8,235.2z" fill="#006464"/>
<ellipse cx="286.5" cy="229" rx="3.4" ry="1.6" fill="#1fc4c4"/>
<polyline points="274.5,229 504.5,283" fill="none" stroke="#008888" stroke-width="0.6"/>
<!-- recessed ledge triangle -->
<polygon points="337,199.8 394,198.9 394,212" fill="#006a6a"/>
<ellipse cx="380.7" cy="202" rx="5" ry="2" fill="#22cccc"/>
<!-- neck -->
<path d="M332.3,166 L394,166 L394,197 Q365,204 337,200 L332.3,196z" fill="url(#neck)"/>
<!-- dome underside shadow -->
<clipPath id="shc"><rect x="301" y="140" width="160" height="50"/></clipPath>
<path clip-path="url(#shc)" transform="translate(0,3.6)" d="M299.6,153.5 C303,163.5 325,168.8 349,169.3 C372,169.3 392,165.4 407,161.3 C424,156.4 441,151.5 446.6,144.6" fill="none" stroke="#005a5a" stroke-width="5.4"/>
<!-- dome -->
<clipPath id="domeclip"><path d="M302,153 C305,140 318,128 336,125.6 C352,124 372,126 386,128.8 C404,131.5 420,134 428,136 C440,139 447,144 448.5,148 C440,160 400,170 350,169 C320,168 304,160 302,153z"/></clipPath>
<g clip-path="url(#domeclip)">
<rect x="298" y="120" width="155" height="55" fill="url(#domeSkirt)"/>
<path d="M296,149 C306,149.5 318,149 330,146 C345,141.5 350,138.5 360,136.5 C380,133 420,133 454,142 L454,118 L296,118z" fill="url(#domeTop)" filter="url(#b15)"/>
<path d="M318,152 C330,150.5 342,147.5 352,143.5" fill="none" stroke="#38ecec" stroke-width="2.6" filter="url(#b15)" opacity="0.75"/>
<path d="M310,136 C316,130.5 326,127.4 336,126.4 C346,125.4 356,125.6 366,126.6" fill="none" stroke="#1aa6a6" stroke-width="0.9" filter="url(#b1)" opacity="0.9"/>
</g>
<!-- green ring -->
<path d="M299.6,153.5 C303,163.5 325,168.8 349,169.3 C372,169.3 392,165.4 407,161.3 C424,156.4 441,151.5 446.6,144.6" fill="none" stroke="#157a3c" stroke-width="3.4" stroke-linecap="round"/>
<path d="M299.6,153.3 C303,163.2 325,168.5 349,169 C372,169 392,165 407,161 C424,156 441,151 446.6,144.3" fill="none" stroke="#4fd083" stroke-width="1.9" stroke-linecap="round"/>
<!-- block left of disc (with hole) -->
<polygon points="418,164 437,157.5 459.6,161.5 459.6,168 429,171 418,166.5" fill="#004e4e"/>
<ellipse cx="435.6" cy="162.8" rx="11" ry="3.1" fill="#0a9a9a"/>
<path d="M424.6,162.8 A11,3.1 0 0 1 446.6,162.8 A11,2 0 0 0 424.6,162.8z" fill="#006060"/>
<polygon points="418,166.3 429,170.6 429,190 418,186" fill="#10b2b2"/>
<polygon points="429,170.6 459.6,166.5 459.6,186 445,192 429,190" fill="#004242"/>
<!-- block 2 (near z axis) -->
<polygon points="449.6,151.5 470,148 493.5,150 478,157" fill="#006666"/>
<ellipse cx="476" cy="151.3" rx="7" ry="2" fill="#1cc0c0"/>
<polygon points="449.6,152 478,156.5 478,170 449.6,166" fill="#00aeae"/>
<polygon points="478,156.5 493.5,150 493.5,170 478,170" fill="#004646"/>
<!-- wedges right -->
<polygon points="510,159.2 519.2,149.2 542.7,151.4 559.7,157 563,159.6 522,160.2" fill="#044a4a"/>
<ellipse cx="532.8" cy="154.8" rx="6.6" ry="2.3" fill="#12aaaa"/>
<path d="M526.2,154.8 A6.6,2.3 0 0 1 539.4,154.8 A6.6,1.5 0 0 0 526.2,154.8z" fill="#056060"/>
<polygon points="510,159.2 522,160.2 522,168 510,169.9" fill="#12a8a8"/>
<polygon points="522,160.2 563,159.6 564.5,163.2 525.6,167.2 522,168" fill="#0ea2a2"/>
<polygon points="525.6,167.2 564.5,163.2 566.9,166.3 565.4,173.4 550.5,174.9" fill="#044646"/>
<ellipse cx="544.2" cy="167.4" rx="5.6" ry="1.8" fill="#12aaaa"/>
<polygon points="522.6,167.8 550.5,174.9 550.5,192.6 533.4,187 533.4,177 522.6,172.7" fill="#10a8a8"/>
<polygon points="550.5,174.9 565.4,173.4 566.9,181.3 550.5,192.6" fill="#033c3c"/>
<!-- central disc -->
<path d="M444.3,176 L444.3,193 A44.7,6.8 0 0 0 533.7,193 L533.7,176z" fill="url(#disc)"/>
<ellipse cx="489" cy="176" rx="44.7" ry="4.7" fill="#006c6c"/>
<ellipse cx="490.6" cy="174.6" rx="12.6" ry="2.9" fill="#0aa0a0"/>
<path d="M444.3,184.8 A44.7,3.4 0 0 0 533.7,185.2" fill="none" stroke="#ee9fae" stroke-width="2.7"/>
<path d="M444.3,184.2 A44.7,3.4 0 0 0 533.7,184.6" fill="none" stroke="#fde0e6" stroke-width="0.9"/>
<!-- z axis -->
<rect x="490.1" y="124.5" width="1" height="26" fill="#a8604e"/>
<rect x="489.2" y="148" width="2.8" height="21.5" fill="#8e3a28"/>
<text x="489" y="123.6" font-size="4.4" fill="#b07a6a" font-family="Liberation Sans, sans-serif">Z</text>
<!-- curved pin at right -->
<path d="M553.4,181.4 Q563,181.6 569.4,173.6" fill="none" stroke="#9a4650" stroke-width="3.2" stroke-linecap="round"/>
<path d="M553.4,180.8 Q562.6,181 568.8,173.4" fill="none" stroke="#c47a86" stroke-width="1.1"/>
<circle cx="553.6" cy="181.2" r="1.8" fill="#fff0f2"/>
<path d="M568,166.3 l11.5,-0.2" stroke="#c89a6a" stroke-width="0.6"/>
<path d="M571,173.5 l11.5,0.1" stroke="#c8c860" stroke-width="0.7"/>
<!-- dark green rod -->
<line x1="398.4" y1="193.6" x2="493.4" y2="215.4" stroke="#0a5c12" stroke-width="4.4" stroke-linecap="round"/>
<line x1="398.4" y1="193" x2="493.4" y2="214.8" stroke="#178a22" stroke-width="1.8" stroke-linecap="round"/>
<circle cx="493.8" cy="215.6" r="1.2" fill="#9be36a"/>
<!-- kidney slot -->
<path d="M344.4,217.4 Q350,214.6 357,215.6 L372.8,221.4 L372.6,225.3 Q376,243 383.9,247 Q382,252 376.3,253.7 L343.1,244.2 Q338.4,238 338,229 Q338.5,221.6 344.4,217.4z" fill="url(#kid)"/>
<!-- circular flange -->
<path d="M430,205.6 C416,212 409,228 409,245 C409,264 420,281 441,284.6 C426,278 416.4,262 416.4,245 C416.4,229 420,214 430,205.6z" fill="#005a5a"/>
<ellipse cx="441.4" cy="244" rx="15.8" ry="23" fill="#004e4e"/>
<ellipse cx="447.4" cy="244.2" rx="11.4" ry="19.6" fill="#029999"/>
<ellipse cx="451.6" cy="243.4" rx="6.6" ry="15" fill="#034444"/>
<line x1="449" y1="244.6" x2="456" y2="243.2" stroke="#c88a6a" stroke-width="0.4"/>
<ellipse cx="425" cy="217.5" rx="3.5" ry="4" fill="#004c4c"/>
<ellipse cx="455.4" cy="225.6" rx="2" ry="4.4" fill="#004c4c" transform="rotate(-12 455.4 225.6)"/>
<ellipse cx="425" cy="262.4" rx="3.5" ry="4" fill="#004c4c"/>
<ellipse cx="455.4" cy="268.6" rx="3.2" ry="4.2" fill="#004c4c"/>
<!-- pink pins -->
<g stroke="#ee9cab" stroke-width="4.2" stroke-linecap="round">
<line x1="322.4" y1="209.2" x2="341.2" y2="213.8"/>
<line x1="376.4" y1="221.6" x2="404.8" y2="228.4"/>
<line x1="322.4" y1="242.2" x2="337.6" y2="246.4"/>
<line x1="379.2" y1="255.6" x2="408.4" y2="262.6"/>
<line x1="462" y1="241.8" x2="483" y2="246"/>
<line x1="458" y1="274.6" x2="501.4" y2="283.8"/>
<line x1="321.8" y1="176.4" x2="327.3" y2="177.4"/>
</g>
<g stroke="#fbd9df" stroke-width="1.7" stroke-linecap="round">
<line x1="322.4" y1="208.8" x2="341.2" y2="213.4"/>
<line x1="376.4" y1="221.2" x2="404.8" y2="228"/>
<line x1="322.4" y1="241.8" x2="337.6" y2="246"/>
<line x1="379.2" y1="255.2" x2="408.4" y2="262.2"/>
<line x1="462" y1="241.4" x2="483" y2="245.6"/>
<line x1="458" y1="274.2" x2="501.4" y2="283.4"/>
<line x1="321.8" y1="176" x2="327.3" y2="177"/>
</g>
<line x1="490" y1="251.3" x2="499" y2="250.4" stroke="#7ab04a" stroke-width="1"/>
<circle cx="500.3" cy="250.2" r="1.7" fill="#ffe0e4"/>
<!-- bottom green edge -->
<line x1="275.5" y1="266.3" x2="503" y2="318.2" stroke="#1a9a50" stroke-width="4.2" stroke-linecap="round"/>
<line x1="275.5" y1="265.9" x2="503" y2="317.8" stroke="#5cf08c" stroke-width="2.2" stroke-linecap="round"/>
<circle cx="503.3" cy="318" r="1.2" fill="#d8f7a0"/>
<!-- stylus -->
<rect x="408.8" y="80" width="8" height="30" fill="url(#sty)"/>
<rect x="409.6" y="110" width="6.6" height="8" fill="url(#sty)"/>
<rect x="410.1" y="117.6" width="4.9" height="60" fill="url(#sty)"/>
<circle cx="409.6" cy="95.4" r="0.6" fill="#222"/>
<circle cx="416.4" cy="116.2" r="0.6" fill="#fff"/>
<path d="M398.2,179.4 L398.2,182.4 A14,3.4 0 0 0 426.2,182.4 L426.2,179.4z" fill="#b4b4b4"/>
<ellipse cx="412.2" cy="179.4" rx="14" ry="3.6" fill="#eeeeee" stroke="#a4a4a4" stroke-width="0.5"/>
<ellipse cx="412.4" cy="178.8" rx="6" ry="1.6" fill="#c6c6c6"/>
<rect x="410.1" y="170" width="4.9" height="9" fill="url(#sty)"/>
<!-- axis triad -->
<g>
<polygon points="291.4,370 301.6,380.4 299.4,385.2 291.4,383" fill="#9aa0a0" opacity="0.45"/>
<line x1="291.2" y1="369.4" x2="291.2" y2="383.4" stroke="#d02424" stroke-width="2.6"/>
<polygon points="288.6,370.6 291.2,367.4 293.8,370.6" fill="#d02424"/>
<line x1="291.4" y1="383" x2="301.2" y2="380" stroke="#22a244" stroke-width="2.2"/>
<line x1="290.4" y1="383.4" x2="300" y2="385.8" stroke="#1c2cb8" stroke-width="2.6"/>
<text x="289.2" y="364.6" font-size="5.2" fill="#8a8f92" font-family="Liberation Sans, sans-serif">Z</text>
<text x="302.4" y="380.4" font-size="5.2" fill="#7fa08a" font-family="Liberation Sans, sans-serif">Y</text>
<text x="301" y="387" font-size="4.6" fill="#7f86b0" font-family="Liberation Sans, sans-serif">X</text>
</g>
</g>
</svg>

<div class="a" style="left:365.30px;top:68.90px;width:200.20px;height:11.00px;background:#f5f7f9;box-shadow:0 0 0.6px rgba(0,0,0,0.4);"></div>
<svg class="a" style="left:368.00px;top:70.60px" width="8" height="8" viewBox="0 0 8 8"><path d="M0.4,2.6 L2.6,0.6 L7.4,0.6 L7.4,5.2 L5.2,7.4 L0.4,7.4z" fill="#1f6fd0"/><path d="M0.4,2.6 L5.2,2.6 L5.2,7.4 M5.2,2.6 L7.4,0.6" stroke="#8cc0f4" stroke-width="0.5" fill="none"/></svg>
<svg class="a" style="left:379.30px;top:73.80px" width="2.2" height="1.6" viewBox="0 0 2.2 1.6"><path d="M0,0 L2.2,0 L1.1,1.5z" fill="#222"/></svg>
<div class="a" style="left:383.50px;top:70.20px;width:0.40px;height:8.40px;background:#cfd4da;"></div>
<svg class="a" style="left:387.30px;top:70.80px" width="10" height="7.4" viewBox="0 0 10 7.4"><path d="M0.8,0.6 V5 M0.8,3 Q3,1.4 3.2,3.4 Q3,5.2 0.8,4.6 M4.6,1.6 Q7.6,-0.4 8.6,2 Q8.8,4 6,3.8 M6,3.8 L5.2,6.6" fill="none" stroke="#333" stroke-width="0.7"/></svg>
<svg class="a" style="left:400.90px;top:73.80px" width="2.2" height="1.6" viewBox="0 0 2.2 1.6"><path d="M0,0 L2.2,0 L1.1,1.5z" fill="#222"/></svg>
<div class="a" style="left:405.00px;top:70.20px;width:0.40px;height:8.40px;background:#cfd4da;"></div>
<svg class="a" style="left:409.30px;top:70.40px" width="12" height="8.6" viewBox="0 0 12 8.6"><circle cx="3.6" cy="4" r="3.4" fill="#f2a0a8"/><ellipse cx="2.8" cy="2.8" rx="1.4" ry="1" fill="#fbd4d8"/><path d="M7.6,7.6 L10.6,4.6 M8.4,5.2 L10.8,7.4" stroke="#555" stroke-width="0.6"/></svg>
<svg class="a" style="left:426.50px;top:70.40px" width="12" height="8.6" viewBox="0 0 12 8.6"><circle cx="3.6" cy="4" r="3.4" fill="#34b84c"/><ellipse cx="2.8" cy="2.8" rx="1.4" ry="1" fill="#a0e8aa"/><path d="M7.6,7.6 L10.6,4.6 M8.4,5.2 L10.8,7.4" stroke="#555" stroke-width="0.6"/></svg>
<div class="a" style="left:441.60px;top:69.60px;width:13.60px;height:9.60px;background:#cfe2f6;"></div>
<svg class="a" style="left:442.60px;top:70.60px" width="12" height="8" viewBox="0 0 12 8"><path d="M0.8,0.6 L4.2,6.8" stroke="#d03040" stroke-width="1"/><path d="M4.2,6.8 L8,3.6" stroke="#2a50b0" stroke-width="0.9"/><ellipse cx="8.6" cy="5.6" rx="2.8" ry="1.7" fill="#3aa0d8"/></svg>
<svg class="a" style="left:457.80px;top:73.80px" width="2.2" height="1.6" viewBox="0 0 2.2 1.6"><path d="M0,0 L2.2,0 L1.1,1.5z" fill="#222"/></svg>
<div class="a" style="left:463.80px;top:69.60px;width:17.20px;height:9.60px;background:#cfe2f6;"></div>
<svg class="a" style="left:464.60px;top:70.60px" width="16" height="8" viewBox="0 0 16 8"><circle cx="3.6" cy="4" r="3" fill="none" stroke="#9ab4d0" stroke-width="0.6"/><path d="M1.6,4 H5.6 M3.6,2 V6" stroke="#9ab4d0" stroke-width="0.5"/><path d="M7.4,3 L10,5" stroke="#2a50b0" stroke-width="0.9"/><ellipse cx="12.4" cy="5.4" rx="2.8" ry="1.7" fill="#3aa0d8"/></svg>
<svg class="a" style="left:483.50px;top:73.80px" width="2.2" height="1.6" viewBox="0 0 2.2 1.6"><path d="M0,0 L2.2,0 L1.1,1.5z" fill="#222"/></svg>
<div class="a" style="left:488.00px;top:70.20px;width:0.40px;height:8.40px;background:#cfd4da;"></div>
<div class="a" style="left:490.40px;top:69.60px;width:14.00px;height:9.60px;background:#cfe2f6;"></div>
<svg class="a" style="left:491.40px;top:70.60px" width="13" height="8" viewBox="0 0 13 8"><path d="M1,0.4 V6.6 H3.6 M1,3.6 L3.6,1.4 M1.6,3.8 L3.8,6.4" fill="none" stroke="#20488c" stroke-width="1"/><ellipse cx="9" cy="5.4" rx="2.9" ry="1.7" fill="#3aa0d8"/></svg>
<div class="a" style="left:507.40px;top:69.60px;width:15.00px;height:9.60px;background:#cfe2f6;"></div>
<svg class="a" style="left:508.40px;top:70.40px" width="13.6" height="8.4" viewBox="0 0 13.6 8.4"><path d="M0.8,0.6 H3.4 V7.4 H0.8z" fill="#7a8088"/><path d="M3.4,1.4 H6 V4 M3.4,0.6 V7.4" fill="none" stroke="#555" stroke-width="0.7"/><ellipse cx="9.8" cy="5.6" rx="2.9" ry="1.7" fill="#3aa0d8"/></svg>
<div class="t" style="left:528.60px;top:72.81px;font-size:3.91px;line-height:4.69px;letter-spacing:-0.323px;color:#333;">0%</div>
<svg class="a" style="left:536.40px;top:73.80px" width="2.2" height="1.6" viewBox="0 0 2.2 1.6"><path d="M0,0 L2.2,0 L1.1,1.5z" fill="#222"/></svg>
<div class="a" style="left:541.00px;top:70.20px;width:0.40px;height:8.40px;background:#cfd4da;"></div>
<svg class="a" style="left:546.50px;top:70.60px" width="8.6" height="8" viewBox="0 0 8.6 8"><g fill="#555"><rect x="0.6" y="0.6" width="1.3" height="1.3"/><rect x="6.2" y="0.4" width="1.3" height="1.3"/><rect x="0.6" y="5.8" width="1.3" height="1.3"/><rect x="3.4" y="3" width="2.4" height="2.6" fill="#888"/><rect x="6.4" y="5" width="1.3" height="1.3"/></g></svg>
<svg class="a" style="left:559.10px;top:73.80px" width="2.2" height="1.6" viewBox="0 0 2.2 1.6"><path d="M0,0 L2.2,0 L1.1,1.5z" fill="#222"/></svg>
<div class="a" style="left:668.60px;top:57.20px;width:111.80px;height:9.00px;background:#dadde2;"></div>
<div class="t" style="left:670.80px;top:59.53px;font-size:4.87px;line-height:5.85px;color:#444;">Program View</div>
<svg class="a" style="left:756.50px;top:60.90px" width="3" height="2" viewBox="0 0 3 2"><path d="M0,0 L3,0 L1.5,1.9z" fill="#333"/></svg>
<svg class="a" style="left:764.60px;top:59.20px" width="3.4" height="5.4" viewBox="0 0 3.4 5.4"><path d="M1,0.3 H2.6 V2.6 H1z M0.3,2.8 H3.2 M1.75,2.8 V5.2" fill="none" stroke="#333" stroke-width="0.6"/></svg>
<svg class="a" style="left:773.20px;top:59.80px" width="3.6" height="3.6" viewBox="0 0 3.6 3.6"><path d="M0.2,0.2 L3.4,3.4 M3.4,0.2 L0.2,3.4" stroke="#222" stroke-width="0.8"/></svg>
<div class="a" style="left:668.60px;top:66.20px;width:111.80px;height:344.80px;background:#ffffff;"></div>
<div class="a" style="left:668.60px;top:66.20px;width:1.40px;height:344.80px;background:#e3e6ea;"></div>
<div class="a" style="left:674.00px;top:71.30px;width:4.50px;height:4.50px;background:#1b7fd2;"></div>
<svg class="a" style="left:684.00px;top:71.00px" width="4.6" height="5.2" viewBox="0 0 4.6 5.2"><path d="M4.4,0.2 L4.4,5 L0.2,2.6z" fill="#1b7fd2"/></svg>
<svg class="a" style="left:693.60px;top:71.00px" width="4.6" height="5.2" viewBox="0 0 4.6 5.2"><path d="M0.2,0.2 L0.2,5 L4.4,2.6z" fill="#1b7fd2"/></svg>
<div class="a" style="left:703.60px;top:73.20px;width:2.60px;height:0.80px;background:#1b7fd2;"></div>
<div class="t" style="left:713.80px;top:71.31px;font-size:4.73px;line-height:5.68px;color:#555;">x1</div>
<svg class="a" style="left:726.20px;top:72.20px" width="2.6" height="2.6" viewBox="0 0 2.6 2.6"><path d="M0,1.3 H2.6 M1.3,0 V2.6" stroke="#1b7fd2" stroke-width="0.8"/></svg>
<svg class="a" style="left:760.40px;top:70.20px" width="7" height="6.4" viewBox="0 0 7 6.4"><path d="M2.4,1.6 L4.8,0.4 L6.8,1 L6.8,3.6 L4.6,4.8 L2.4,4.2z" fill="#e3e5e8" stroke="#6f757e" stroke-width="0.5"/><path d="M0.6,3 L3,1.8 L5.2,2.4 L5.2,5 L2.8,6.2 L0.6,5.6z" fill="#cfd2d7" stroke="#666c75" stroke-width="0.55"/><path d="M0.6,3 L2.8,3.6 L5.2,2.4 M2.8,3.6 V6.2" fill="none" stroke="#666c75" stroke-width="0.4"/></svg>
<svg class="a" style="left:771.00px;top:70.20px" width="7" height="6.4" viewBox="0 0 7 6.4"><path d="M2.4,1.6 L4.8,0.4 L6.8,1 L6.8,3.6 L4.6,4.8 L2.4,4.2z" fill="#e3e5e8" stroke="#6f757e" stroke-width="0.5"/><path d="M0.6,3 L3,1.8 L5.2,2.4 L5.2,5 L2.8,6.2 L0.6,5.6z" fill="#cfd2d7" stroke="#666c75" stroke-width="0.55"/><path d="M0.6,3 L2.8,3.6 L5.2,2.4 M2.8,3.6 V6.2" fill="none" stroke="#666c75" stroke-width="0.4"/></svg>
<div class="a" style="left:670.80px;top:81.40px;width:106.40px;height:12.60px;background:#ffffff;border:0.5px solid #e6e8eb;box-sizing:border-box;"></div>
<svg class="a" style="left:673.60px;top:85.00px" width="5.6" height="5.6" viewBox="0 0 5.6 5.6"><path d="M4.6,1.6 A2.2,2.2 0 1 0 5,3.4" fill="none" stroke="#1b8fd8" stroke-width="1.1"/><path d="M3.6,0.2 L5.6,1.8 L3.4,2.6z" fill="#1b8fd8"/></svg>
<div class="t" style="left:683.00px;top:85.65px;font-size:4.50px;line-height:5.40px;color:#555;">0:00:16</div>
<div class="a" style="left:702.50px;top:87.50px;width:50.50px;height:0.70px;background:#cfd3d8;"></div>
<div class="a" style="left:707.80px;top:84.40px;width:3.80px;height:6.80px;background:#eceef0;border:0.4px solid #c3c7cd;box-sizing:border-box;"></div>
<div class="t" style="left:757.50px;top:85.65px;font-size:4.50px;line-height:5.40px;color:#555;">0:01:47</div>
<div class="a" style="left:670.00px;top:95.00px;width:110.00px;height:315.60px;background:#ffffff;border:0.5px solid #a9aeb6;box-sizing:border-box;"></div>
<svg class="a" style="left:673.00px;top:97.80px" width="2.6" height="4" viewBox="0 0 2.6 4"><path d="M0.3,0.3 L2.2,2 L0.3,3.7z" fill="#fff" stroke="#9aa0a8" stroke-width="0.5"/></svg>
<svg class="a" style="left:679.00px;top:97.00px" width="6" height="5.6" viewBox="0 0 6 5.6"><path d="M0.8,5.2 V2.4 Q0.8,0.8 2.6,0.8 H4" fill="none" stroke="#555" stroke-width="0.7"/><path d="M3.8,0 L5.6,0.9 L3.8,1.9z" fill="#333"/></svg>
<div class="t" style="left:686.00px;top:97.38px;font-size:4.94px;line-height:5.93px;color:#333;">Transition from Start</div>
<svg class="a" style="left:672.70px;top:106.38px" width="3" height="3" viewBox="0 0 3 3"><path d="M3,0 L3,3 L0,3z" fill="#333"/></svg>
<svg class="a" style="left:679.00px;top:104.98px" width="6" height="6" viewBox="0 0 6 6"><circle cx="3" cy="3" r="2.2" fill="none" stroke="#a8900c" stroke-width="1.1"/><path d="M3.6,0.2 L5,1.4" stroke="#222" stroke-width="0.6"/></svg>
<div class="t" style="left:686.00px;top:105.53px;font-size:5.01px;line-height:6.01px;color:#333;">Circle - 884</div>
<svg class="a" style="left:680.30px;top:114.56px" width="3" height="3" viewBox="0 0 3 3"><path d="M3,0 L3,3 L0,3z" fill="#333"/></svg>
<svg class="a" style="left:686.40px;top:113.16px" width="6" height="6" viewBox="0 0 6 6"><circle cx="3" cy="3" r="2.3" fill="none" stroke="#d05a68" stroke-width="0.9"/></svg>
<div class="t" style="left:693.80px;top:113.83px;font-size:4.80px;line-height:5.76px;color:#333;">Measurement Point Set 2 - T9_P1</div>
<svg class="a" style="left:694.60px;top:121.34px" width="6" height="6" viewBox="0 0 6 6"><circle cx="3" cy="3" r="2.3" fill="none" stroke="#c0202c" stroke-width="0.9" stroke-dasharray="1.6 0.7"/></svg>
<div class="t" style="left:701.20px;top:121.95px;font-size:4.91px;line-height:5.89px;color:#333;">Circular scan (1)</div>
<svg class="a" style="left:694.80px;top:129.92px" width="6" height="5" viewBox="0 0 6 5"><path d="M0.8,2.6 Q1,0.8 2.8,0.8" fill="none" stroke="#aeb3ba" stroke-width="0.6"/><circle cx="3.6" cy="1.2" r="0.6" fill="#444"/></svg>
<div class="t" style="left:701.20px;top:130.10px;font-size:4.94px;line-height:5.93px;color:#333;">Move circular</div>
<svg class="a" style="left:694.60px;top:137.70px" width="6" height="6" viewBox="0 0 6 6"><circle cx="3" cy="3" r="2.3" fill="none" stroke="#c0202c" stroke-width="0.9" stroke-dasharray="1.6 0.7"/></svg>
<div class="t" style="left:701.20px;top:138.31px;font-size:4.91px;line-height:5.89px;color:#333;">Circular scan (2)</div>
<svg class="a" style="left:694.80px;top:146.28px" width="6" height="5" viewBox="0 0 6 5"><path d="M0.8,2.6 Q1,0.8 2.8,0.8" fill="none" stroke="#aeb3ba" stroke-width="0.6"/><circle cx="3.6" cy="1.2" r="0.6" fill="#444"/></svg>
<div class="t" style="left:701.20px;top:146.46px;font-size:4.94px;line-height:5.93px;color:#333;">Move circular</div>
<svg class="a" style="left:694.60px;top:154.06px" width="6" height="6" viewBox="0 0 6 6"><circle cx="3" cy="3" r="2.3" fill="none" stroke="#c0202c" stroke-width="0.9" stroke-dasharray="1.6 0.7"/></svg>
<div class="t" style="left:701.20px;top:154.67px;font-size:4.91px;line-height:5.89px;color:#333;">Circular scan (3)</div>
<svg class="a" style="left:694.80px;top:162.64px" width="6" height="5" viewBox="0 0 6 5"><path d="M0.8,2.6 Q1,0.8 2.8,0.8" fill="none" stroke="#aeb3ba" stroke-width="0.6"/><circle cx="3.6" cy="1.2" r="0.6" fill="#444"/></svg>
<div class="t" style="left:701.20px;top:162.82px;font-size:4.94px;line-height:5.93px;color:#333;">Move circular</div>
<div class="a" style="left:693.20px;top:169.52px;width:43.80px;height:7.80px;background:#2b7bd0;"></div>
<svg class="a" style="left:694.60px;top:170.42px" width="6" height="6" viewBox="0 0 6 6"><circle cx="3" cy="3" r="2.3" fill="none" stroke="#5aa0ea" stroke-width="0.8" stroke-dasharray="1.6 0.7"/></svg>
<div class="t" style="left:701.20px;top:171.12px;font-size:4.74px;line-height:5.69px;color:#ffffff;">Circular scan (4)</div>
<svg class="a" style="left:694.80px;top:179.00px" width="6" height="5" viewBox="0 0 6 5"><path d="M0.8,2.6 Q1,0.8 2.8,0.8" fill="none" stroke="#aeb3ba" stroke-width="0.6"/><circle cx="3.6" cy="1.2" r="0.6" fill="#444"/></svg>
<div class="t" style="left:701.20px;top:179.18px;font-size:4.94px;line-height:5.93px;color:#333;">Move circular</div>
<svg class="a" style="left:694.60px;top:186.78px" width="6" height="6" viewBox="0 0 6 6"><circle cx="3" cy="3" r="2.3" fill="none" stroke="#c0202c" stroke-width="0.9" stroke-dasharray="1.6 0.7"/></svg>
<div class="t" style="left:701.20px;top:187.39px;font-size:4.91px;line-height:5.89px;color:#333;">Circular scan (5)</div>
<svg class="a" style="left:673.00px;top:195.96px" width="2.6" height="4" viewBox="0 0 2.6 4"><path d="M0.3,0.3 L2.2,2 L0.3,3.7z" fill="#fff" stroke="#9aa0a8" stroke-width="0.5"/></svg>
<svg class="a" style="left:679.00px;top:195.16px" width="6" height="5.6" viewBox="0 0 6 5.6"><path d="M0.8,5.2 V2.4 Q0.8,0.8 2.6,0.8 H4" fill="none" stroke="#555" stroke-width="0.7"/><path d="M3.8,0 L5.6,0.9 L3.8,1.9z" fill="#333"/></svg>
<div class="t" style="left:686.00px;top:195.64px;font-size:4.78px;line-height:5.73px;color:#333;">Transition</div>
<svg class="a" style="left:673.00px;top:204.14px" width="2.6" height="4" viewBox="0 0 2.6 4"><path d="M0.3,0.3 L2.2,2 L0.3,3.7z" fill="#fff" stroke="#9aa0a8" stroke-width="0.5"/></svg>
<svg class="a" style="left:679.00px;top:203.54px" width="6" height="5" viewBox="0 0 6 5"><path d="M0.6,4.6 Q0.6,0.8 2.8,0.8 Q5,0.8 5.2,4.6" fill="none" stroke="#a8860c" stroke-width="1.1"/><path d="M3.2,2.2 L5.2,4.4" stroke="#222" stroke-width="0.6"/></svg>
<div class="t" style="left:686.00px;top:203.75px;font-size:4.90px;line-height:5.88px;color:#333;">Curve - Curve 2</div>
<svg class="a" style="left:673.00px;top:212.32px" width="2.6" height="4" viewBox="0 0 2.6 4"><path d="M0.3,0.3 L2.2,2 L0.3,3.7z" fill="#fff" stroke="#9aa0a8" stroke-width="0.5"/></svg>
<svg class="a" style="left:679.00px;top:211.52px" width="6" height="5.6" viewBox="0 0 6 5.6"><path d="M0.8,5.2 V2.4 Q0.8,0.8 2.6,0.8 H4" fill="none" stroke="#555" stroke-width="0.7"/><path d="M3.8,0 L5.6,0.9 L3.8,1.9z" fill="#333"/></svg>
<div class="t" style="left:686.00px;top:212.00px;font-size:4.78px;line-height:5.73px;color:#333;">Transition</div>
<svg class="a" style="left:673.00px;top:220.50px" width="2.6" height="4" viewBox="0 0 2.6 4"><path d="M0.3,0.3 L2.2,2 L0.3,3.7z" fill="#fff" stroke="#9aa0a8" stroke-width="0.5"/></svg>
<svg class="a" style="left:679.00px;top:219.90px" width="5.6" height="5.2" viewBox="0 0 5.6 5.2"><path d="M0.4,1.4 L4.6,0.4 L5,3.8 L0.8,4.8z" fill="#c8962a"/></svg>
<div class="t" style="left:686.00px;top:220.05px;font-size:5.01px;line-height:6.01px;color:#333;">Plane - 718</div>
<svg class="a" style="left:673.00px;top:228.68px" width="2.6" height="4" viewBox="0 0 2.6 4"><path d="M0.3,0.3 L2.2,2 L0.3,3.7z" fill="#fff" stroke="#9aa0a8" stroke-width="0.5"/></svg>
<svg class="a" style="left:679.00px;top:227.88px" width="6" height="5.6" viewBox="0 0 6 5.6"><path d="M0.8,5.2 V2.4 Q0.8,0.8 2.6,0.8 H4" fill="none" stroke="#555" stroke-width="0.7"/><path d="M3.8,0 L5.6,0.9 L3.8,1.9z" fill="#333"/></svg>
<div class="t" style="left:686.00px;top:228.23px;font-size:5.00px;line-height:6.00px;color:#333;">Transition to End</div>
<div class="a" style="left:622.50px;top:412.40px;width:0.50px;height:7.20px;background:#c4c8ce;"></div>
<div class="a" style="left:658.80px;top:412.40px;width:0.50px;height:7.20px;background:#c4c8ce;"></div>
<div class="a" style="left:693.00px;top:412.40px;width:0.50px;height:7.20px;background:#c4c8ce;"></div>
<div class="a" style="left:751.00px;top:412.40px;width:0.50px;height:7.20px;background:#c4c8ce;"></div>
<div class="t" style="left:626.30px;top:413.86px;font-size:4.66px;line-height:5.59px;color:#444;">Project Name</div>
<svg class="a" style="left:664.60px;top:413.50px" width="5" height="5" viewBox="0 0 5 5"><path d="M0.5,0 V4.2 H2.2 M0.5,2.2 L2.2,0.8 M0.9,2.4 L2.3,4" fill="none" stroke="#222" stroke-width="0.8"/><path d="M2.6,4.4 H4.6" stroke="#222" stroke-width="0.5"/></svg>
<div class="t" style="left:671.30px;top:414.03px;font-size:4.37px;line-height:5.25px;letter-spacing:-0.219px;color:#444;">1_CCS 1</div>
<svg class="a" style="left:699.40px;top:413.10px" width="7" height="6" viewBox="0 0 7 6"><circle cx="2.6" cy="3.6" r="2" fill="none" stroke="#111" stroke-width="1"/><circle cx="4.6" cy="2.2" r="1.7" fill="none" stroke="#111" stroke-width="0.9"/></svg>
<div class="t" style="left:708.00px;top:413.95px;font-size:4.50px;line-height:5.40px;color:#555;">0:01:47</div>
<svg class="a" style="left:732.40px;top:412.70px" width="3.4" height="6" viewBox="0 0 3.4 6"><path d="M0.4,0.2 H3 V2.6 L1.7,5.6 L0.4,2.6z" fill="#111"/></svg>
<div class="t" style="left:738.80px;top:413.63px;font-size:5.03px;line-height:6.03px;letter-spacing:0.351px;color:#555;">#--</div>
<svg class="a" style="left:757.00px;top:413.10px" width="6" height="6" viewBox="0 0 6 6"><path d="M0.6,5.4 L1,3.8 L4.2,0.6 L5.4,1.8 L2.2,5z" fill="#888" stroke="#555" stroke-width="0.4"/></svg>
<div class="t" style="left:765.50px;top:413.66px;font-size:4.98px;line-height:5.98px;color:#444;">mm</div>
</div>
</body>
</html>
